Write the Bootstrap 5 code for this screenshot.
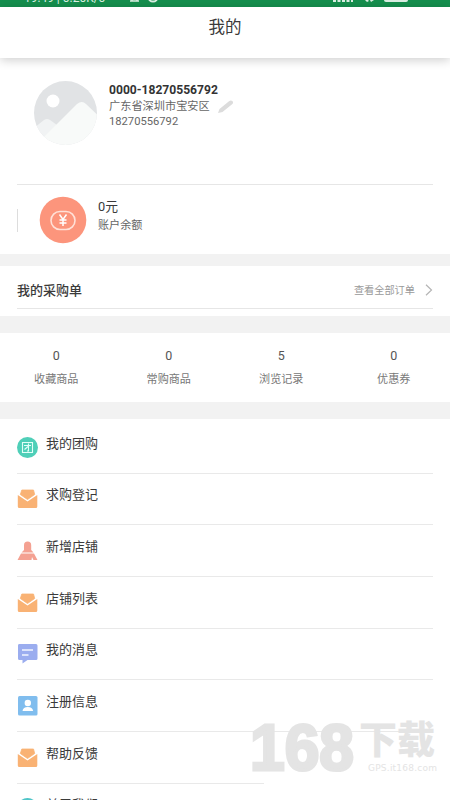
<!DOCTYPE html>
<html lang="zh-CN">
<head>
<meta charset="utf-8">
<meta name="viewport" content="width=device-width, initial-scale=1">
<title>我的</title>
<link href="https://cdn.jsdelivr.net/npm/bootstrap@5.3.0/dist/css/bootstrap.min.css" rel="stylesheet">
<style>
body{font-family:Roboto,"Noto Sans CJK SC",sans-serif;color:#3a3a3a;background:#fff;height:800px;overflow:hidden}
svg{display:block;flex:none}
.statusbar{height:7px;background:#158f4e;color:#dcefe4;font-size:12px;line-height:14px;padding:0 37px 0 24px}
.statusbar>div{margin-top:-9px;height:14px}
.titlebar{height:51px;font-size:16.5px;line-height:41px;box-shadow:0 2px 10px rgba(0,0,0,.2);z-index:1}
.profile{height:126px;margin:0 17px;padding:23px 0 0 17px}
.who{padding-left:12px;color:#666;font-size:11px}
.who b{display:block;font-size:12.1px;line-height:18px;color:#333}
.who .addr{line-height:16px;font-size:11.2px}
.who .tel{line-height:13px;font-size:11.2px}
.balance{height:70px;margin:0 17px;border-top:1px solid #e6e6e6}
.tick{width:1px;height:23px;background:#ddd;margin-top:24px}
.coin{margin:11px 10px 0 21px}
.amt{font-size:12.8px;line-height:18px;padding:13px 0 0 1px}
.sub{font-size:11.1px;line-height:18px;color:#666;padding:1px 0 0 1px}
.gap-bar{background:#f2f2f2}
.orders{height:43px;margin:0 17px;border-bottom:1px solid #e6e6e6;padding-top:7px}
.orders .name{font-size:13px;font-weight:500}
.orders .all{font-size:10.2px;color:#999}
.stats{height:69px;padding-top:12px}
.stats .num{font-size:12.5px;line-height:21px;color:#555}
.stats .lab{font-size:11.1px;line-height:27px;color:#777}
.menu-list{padding-top:3px;margin:0 17px}
.menu-row{height:51.7px;border-bottom:1px solid #e9e9e9}
.menu-row svg{margin-top:14.5px}
.menu-row span{font-size:13px;line-height:20px;margin:11.500px 0 0 8px}
.menu-row.short{border-bottom:0;background:linear-gradient(#e9e9e9,#e9e9e9) left bottom/247px 1px no-repeat}
.wm{right:0;top:700px;width:210px;height:100px}
</style>
<script src="https://cdn.jsdelivr.net/npm/bootstrap@5.3.0/dist/js/bootstrap.bundle.min.js"></script>
</head>
<body>
<svg width="0" height="0" class="position-absolute">
<symbol id="mail" viewBox="0 0 21 21"><path fill="#f9b274" stroke="#f9b274" stroke-width=".8" stroke-linejoin="round" d="M4.800 2h11.700l1.200 4.500-7.200 5L3.300 6.500z"/><path fill="#f9b274" d="M.8 7l9.700 6.500L20.300 7V18.500a1.500 1.500 0 0 1-1.500 1.500h-16.500A1.500 1.500 0 0 1 .8 18.500z"/></symbol>
</svg>
<header class="statusbar overflow-hidden d-flex justify-content-between">
<div class="d-flex">19:49 | 0.20K/s<svg class="ms-4" width="50" height="14" viewBox="0 0 50 14"><path d="M1 10h9M3 4v6h5V4" fill="none" stroke="#dcefe4" stroke-width="1.500"/><circle cx="24" cy="6" r="4.500" fill="none" stroke="#dcefe4" stroke-width="2"/></svg></div>
<div class="d-flex"><svg width="80" height="14"><g fill="#dcefe4"><path d="M0 6h3v5H0zM4.500 6h3v5h-3zM9 4h3v7H9zM13.500 2h3v9h-3zM18 1h2v10h-2z"/><path d="M32 3h2v5l2 2-2 1-3-3zM39 3h2v6l-3 2-1-2h2z"/><rect x="51" y="3" width="24" height="8" rx="2"/></g></svg></div>
</header>
<div class="titlebar bg-white text-center position-relative">我的</div>
<section class="profile d-flex align-items-start">
<svg width="63" height="64" viewBox="0 0 63 64"><defs><clipPath id="c"><ellipse cx="31.500" cy="32" rx="31.500" ry="32"/></clipPath></defs><g clip-path="url(#c)"><path fill="#e1e3e5" d="M0 0h63v64H0z"/><circle cx="19" cy="20" r="6.500" fill="#fff"/><path fill="#f1f3f4" d="M0 47l10-8q3-2 6 0l7 5-10 20H0z"/><path fill="#f8faf9" d="M8 58L43 23q5-4 9 0l18 17v24H8z"/></g></svg>
<div class="who">
<b>0000-18270556792</b>
<div class="addr d-flex align-items-center">广东省深圳市宝安区<svg class="ms-2" width="16" height="14" viewBox="0 0 16 14"><path fill="#dcdcdc" d="M0 13l1.500-4L11 1.300q2-1.500 3.500 0 1.300 1.200-.4 3L4.500 12z"/></svg></div>
<div class="tel">18270556792</div>
</div>
</section>
<section class="balance d-flex align-items-start">
<div class="tick"></div>
<svg class="coin" width="48" height="48" viewBox="0 0 48 48"><circle cx="24" cy="24" r="23.300" fill="#fc957c"/><rect x="12" y="15.500" width="24" height="18" rx="9" fill="none" stroke="#ffe1d8" stroke-width="1.600"/><path d="M20.500 18.500l3.500 5 3.500-5M24 23.500v6.500M20.500 24h7M20.500 27h7" fill="none" stroke="#fff" stroke-width="1.500"/></svg>
<div><div class="amt">0元</div><div class="sub">账户余额</div></div>
</section>
<div class="gap-bar" style="height:12px"></div>
<section class="orders d-flex align-items-center justify-content-between">
<span class="name">我的采购单</span>
<span class="all d-flex align-items-center">查看全部订单<svg class="ms-2" width="10" height="12" viewBox="0 0 10 12"><path d="M3 .7l5.500 5.300L3 11.300" fill="none" stroke="#b5b5b5" stroke-width="1.200"/></svg></span>
</section>
<div style="height:7px"></div>
<div class="gap-bar" style="height:17px"></div>
<section class="stats row g-0 text-center">
<div class="col-3"><div class="num">0</div><div class="lab">收藏商品</div></div>
<div class="col-3"><div class="num">0</div><div class="lab">常购商品</div></div>
<div class="col-3"><div class="num">5</div><div class="lab">浏览记录</div></div>
<div class="col-3"><div class="num">0</div><div class="lab">优惠券</div></div>
</section>
<div class="gap-bar" style="height:17px"></div>
<main class="menu-list">
<div class="menu-row d-flex align-items-start"><svg width="21" height="21" viewBox="0 0 21 21"><circle cx="10.500" cy="10.500" r="10.500" fill="#4fcfb8"/><path d="M5.500 5.500h10v10h-10zM7 8.500h7M11.500 6.500v7.500H10M11 9.500L7.500 12.500" fill="none" stroke="#e2fff8" stroke-width="1.100"/></svg><span>我的团购</span></div>
<div class="menu-row d-flex align-items-start"><svg width="21" height="21"><use href="#mail"/></svg><span>求购登记</span></div>
<div class="menu-row d-flex align-items-start"><svg width="21" height="21" viewBox="0 0 21 21"><path fill="#f4a192" d="M7 10V5.200a3.600 3.600 0 0 1 7.200 0V10l2.300 2.500H4.500zM4 13.500h13L20.500 20H16.500l-1.500-3-.5 3H.5z"/></svg><span>新增店铺</span></div>
<div class="menu-row d-flex align-items-start"><svg width="21" height="21"><use href="#mail"/></svg><span>店铺列表</span></div>
<div class="menu-row d-flex align-items-start"><svg width="21" height="21" viewBox="0 0 21 21"><path fill="#9badef" d="M2 1h17q1.500 0 1.500 1.500v13q0 1.500-1.500 1.500H10.500L5.500 20.500V17H2.500Q1 17 1 15.500v-13Q1 1 2 1z"/><path d="M5 7h11M5 12h6.500" stroke="#f2f5ff" stroke-width="1.300"/></svg><span>我的消息</span></div>
<div class="menu-row d-flex align-items-start"><svg width="21" height="21" viewBox="0 0 21 21"><rect x="1" y="1" width="19.500" height="19.500" rx="1.500" fill="#80bdee"/><circle cx="10.800" cy="8" r="3.200" fill="#fff"/><path fill="#fff" d="M5.500 16q.5-4 5.300-4t5.300 4z"/></svg><span>注册信息</span></div>
<div class="menu-row short d-flex align-items-start"><svg width="21" height="21"><use href="#mail"/></svg><span>帮助反馈</span></div>
<div class="menu-row d-flex align-items-start"><svg width="21" height="21" viewBox="0 0 21 21"><circle cx="10.500" cy="10.500" r="10.500" fill="#4fc5c8"/></svg><span>关于我们</span></div>
</main>
<svg class="wm position-absolute" viewBox="0 0 210 100"><g fill="#e4e4e4" stroke="#e4e4e4"><text transform="translate(10 70) scale(.92 1.03)" font-family="Liberation Sans" font-weight="700" font-size="63" stroke-width="3" stroke-linejoin="miter" textLength="113" lengthAdjust="spacingAndGlyphs">168</text><text x="119" y="53" font-family="Noto Sans CJK SC" font-weight="900" font-size="38" stroke="none">下载</text><text x="128" y="71" font-family="DejaVu Sans" font-size="9" stroke="none" textLength="69">GPS.it168.com</text></g></svg>
</body>
</html>
